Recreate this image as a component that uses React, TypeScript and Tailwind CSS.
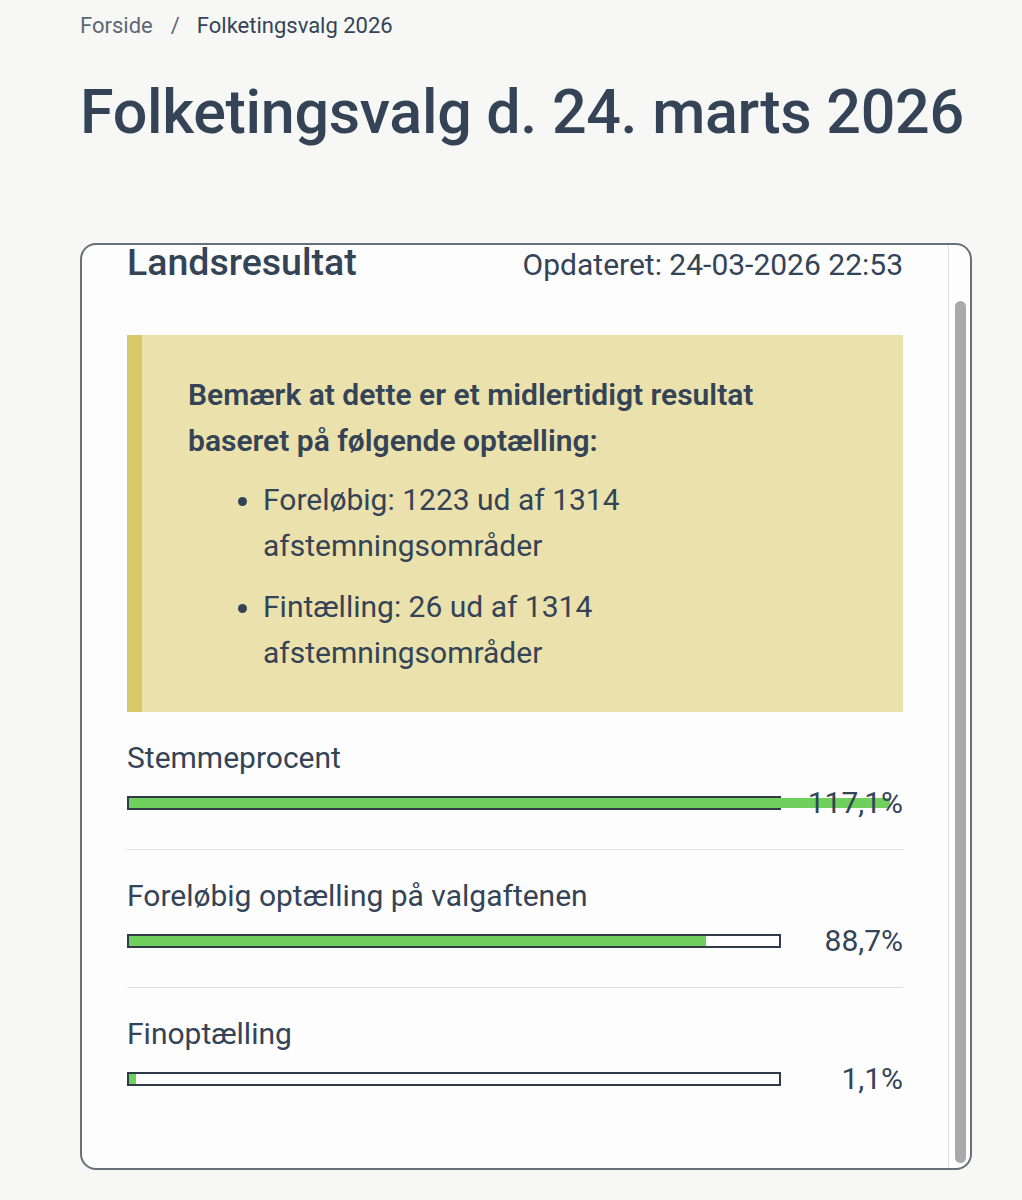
import React from "react";

type Stat = {
  label: string;
  value: number;
  text: string;
};

const stats: Stat[] = [
  { label: "Stemmeprocent", value: 117.1, text: "117,1%" },
  { label: "Foreløbig optælling på valgaftenen", value: 88.7, text: "88,7%" },
  { label: "Finoptælling", value: 1.1, text: "1,1%" },
];

const StatRow = ({ label, value, text, first }: Stat & { first: boolean }) => {
  return (
    <div className={first ? "py-[28px]" : "py-[28px] border-t border-[#dedede]"}>
      <div className="text-[30px] leading-[36px]">{label}</div>
      <div className="mt-[9px] flex h-[36px] items-center">
        <div className="h-[14px] flex-1 border-2 border-[#2f3b48] bg-white">
          {/* fill may run past the bar when the value is over 100 */}
          <div className="h-full bg-[#6fd05e]" style={{ width: `${value}%` }} />
        </div>
        <div className="w-[122px] text-right text-[30px] leading-[36px]">{text}</div>
      </div>
    </div>
  );
};

export default function App() {
  return (
    <div
      className="min-h-[1200px] bg-[#f7f7f6] pl-[80px] pr-[50px] text-[#344456]"
      style={{ fontFamily: "Roboto, 'Noto Sans', sans-serif" }}
    >
      {/* breadcrumb */}
      <nav className="flex items-center pt-[12px] text-[22px] leading-[28px]">
        <span className="text-[#5d6773]">Forside</span>
        <span className="ml-[18px] mr-[17px] text-[#5d6773]">/</span>
        <span>Folketingsvalg 2026</span>
      </nav>

      <h1 className="mt-[36px] whitespace-nowrap text-[61px] font-medium leading-[72px] tracking-[-0.3px]">
        Folketingsvalg d. 24. marts 2026
      </h1>

      <div className="mt-[95px] flex h-[927px] w-[892px] overflow-hidden rounded-[16px] border-2 border-[#66717c] bg-[#fdfdfd]">
        <div className="flex-1 px-[45px]">
          <div className="flex h-[34px] items-baseline justify-between">
            <h2 className="text-[37.5px] font-medium leading-[34px]">Landsresultat</h2>
            <span className="text-[30px] leading-[34px]">Opdateret: 24-03-2026 22:53</span>
          </div>

          {/* notice */}
          <div className="mt-[56px] border-l-[15px] border-[#d9c86a] bg-[#ebe1ad] pb-[36px] pl-[46px] pr-[94px] pt-[37px] text-[30px] leading-[46px]">
            <p className="font-semibold">
              Bemærk at dette er et midlertidigt resultat baseret på følgende optælling:
            </p>
            <ul className="mt-[13px] list-disc pl-[75px]">
              <li>Foreløbig: 1223 ud af 1314 afstemningsområder</li>
              <li className="mt-[15px]">Fintælling: 26 ud af 1314 afstemningsområder</li>
            </ul>
          </div>

          {stats.map((s, i) => (
            <StatRow key={s.label} {...s} first={i === 0} />
          ))}
        </div>

        {/* scrollbar */}
        <div className="flex w-[22px] flex-col border-l border-[#e2e2e2]">
          <div className="mb-[5px] ml-[6px] mt-[56px] w-[11px] flex-1 rounded-full bg-[#a9a9a9]" />
        </div>
      </div>
    </div>
  );
}
